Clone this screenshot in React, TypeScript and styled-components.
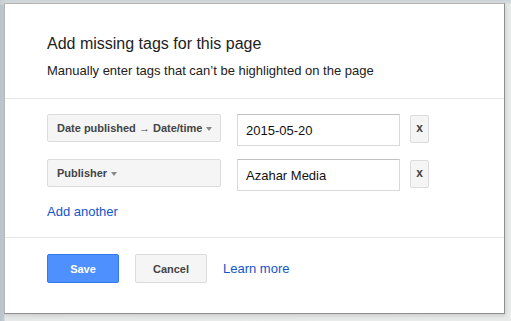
import React from 'react';
import styled, { createGlobalStyle } from 'styled-components';

const GlobalStyle = createGlobalStyle`
  html, body {
    margin: 0;
    padding: 0;
  }
  body {
    width: 511px;
    height: 321px;
    overflow: hidden;
    font-family: 'Liberation Sans', Arial, sans-serif;
    background:
      linear-gradient(to bottom, rgba(200, 208, 212, 0.9) 0, rgba(214, 220, 218, 0.6) 4px, transparent 5px),
      linear-gradient(to right, #b7c2ca 0, #c3ccd2 4px, #e6e9e7 5px, #e8ebe9 100%);
  }
`;

const Dialog = styled.div`
  box-sizing: border-box;
  width: 501px;
  height: 311px;
  margin: 3px 0 0 4px;
  background: #fff;
  border: 1px solid #b4b4b4;
  border-right-color: #8e8e8e;
  border-bottom-color: #8e8e8e;
  box-shadow: 1px 2px 4px rgba(0, 0, 0, 0.12);
  display: flex;
  flex-direction: column;
`;

const Header = styled.div`
  padding: 30px 42px 19px;
  border-bottom: 1px solid #e5e5e5;
`;

const Title = styled.div`
  font-size: 16px;
  line-height: 20px;
  color: #222;
`;

const Subtitle = styled.div`
  margin-top: 9px;
  font-size: 13px;
  line-height: 16px;
  color: #222;
`;

const Body = styled.div`
  padding: 15px 42px 17px;
  border-bottom: 1px solid #e5e5e5;
  display: flex;
  flex-direction: column;
`;

const Row = styled.div`
  display: flex;
  align-items: flex-start;
  margin-bottom: 13px;
`;

const Select = styled.div`
  box-sizing: border-box;
  width: 174px;
  height: 28px;
  padding: 0 9px;
  display: flex;
  align-items: center;
  gap: 4px;
  white-space: nowrap;
  background: #f5f5f5;
  border: 1px solid #dcdcdc;
  border-radius: 2px;
  font-size: 11px;
  font-weight: 700;
  color: #444;
`;

const Caret = styled.span`
  flex: none;
  width: 0;
  height: 0;
  border-left: 3.5px solid transparent;
  border-right: 3.5px solid transparent;
  border-top: 4px solid #888;
  margin-top: 1px;
`;

const Field = styled.div`
  box-sizing: border-box;
  width: 163px;
  height: 32px;
  margin-left: 16px;
  padding: 0 8px;
  display: flex;
  align-items: center;
  border: 1px solid #d9d9d9;
  border-top-color: #c0c0c0;
  font-size: 13px;
  color: #111;
`;

const Remove = styled.div`
  box-sizing: border-box;
  width: 19px;
  height: 28px;
  margin: 1px 0 0 10px;
  display: flex;
  align-items: center;
  justify-content: center;
  background: #f5f5f5;
  border: 1px solid #dcdcdc;
  border-radius: 2px;
  font-size: 12px;
  font-weight: 700;
  color: #444;
  padding-bottom: 3px;
`;

const Link = styled.a`
  font-size: 13px;
  line-height: 16px;
  color: #1155cc;
  text-decoration: none;
  cursor: pointer;
`;

const Footer = styled.div`
  padding: 16px 42px 0;
  display: flex;
  align-items: center;
  gap: 16px;
`;

const Button = styled.div<{ $primary?: boolean }>`
  box-sizing: border-box;
  width: 72px;
  height: 29px;
  display: flex;
  align-items: center;
  justify-content: center;
  border-radius: 2px;
  font-size: 11px;
  font-weight: 700;
  background: ${(p) => (p.$primary ? '#4d90fe' : '#f5f5f5')};
  border: 1px solid ${(p) => (p.$primary ? '#3079ed' : '#dcdcdc')};
  color: ${(p) => (p.$primary ? '#fff' : '#444')};
`;

const tags = [
  { name: 'Date published \u2192 Date/time', value: '2015-05-20' },
  { name: 'Publisher', value: 'Azahar Media' },
];

export default function App() {
  return (
    <>
      <GlobalStyle />
      <Dialog>
        <Header>
          <Title>Add missing tags for this page</Title>
          <Subtitle>Manually enter tags that can’t be highlighted on the page</Subtitle>
        </Header>
        <Body>
          {tags.map((t) => (
            <Row key={t.name}>
              <Select>
                {t.name}
                <Caret />
              </Select>
              <Field>{t.value}</Field>
              <Remove>x</Remove>
            </Row>
          ))}
          <Link>Add another</Link>
        </Body>
        <Footer>
          <Button $primary>Save</Button>
          <Button>Cancel</Button>
          <Link>Learn more</Link>
        </Footer>
      </Dialog>
    </>
  );
}
